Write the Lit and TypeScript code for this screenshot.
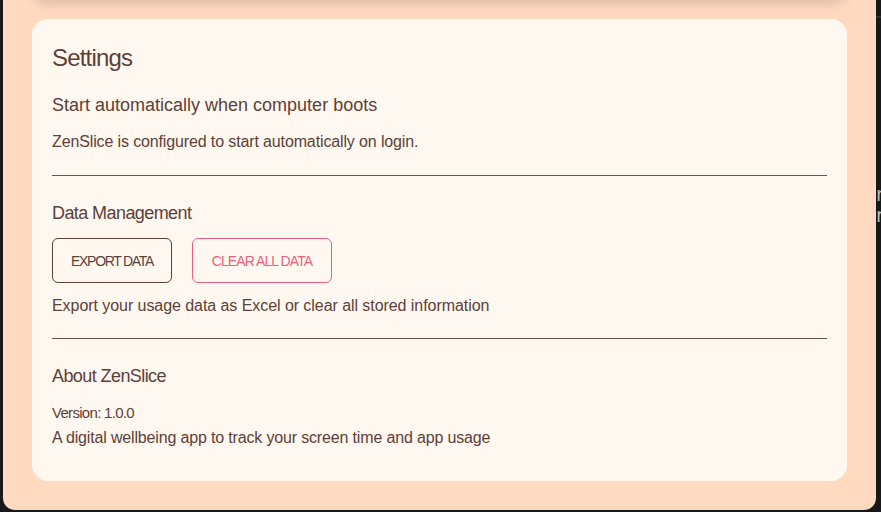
import { LitElement, html, css } from "lit";
import { customElement } from "lit/decorators.js";

@customElement("app-root")
export class AppRoot extends LitElement {
  static styles = css`
    :host {
      display: block;
      width: 881px;
      height: 512px;
      overflow: hidden;
      background: #161819;
      font-family: "Liberation Sans", sans-serif;
      color: #5d4037;
      position: relative;
    }
    .panel {
      box-sizing: border-box;
      margin-left: 3px;
      width: 873px;
      height: 510px;
      background: #ffdac1;
      border-radius: 0 0 12px 12px;
      padding: 19px 29px 0;
      position: relative;
      overflow: hidden;
    }
    .prev {
      position: absolute;
      left: 29px;
      right: 29px;
      top: -40px;
      height: 40px;
      border-radius: 16px;
      box-shadow: 0 4px 12px rgba(93, 64, 55, 0.2);
    }
    .card {
      box-sizing: border-box;
      height: 462px;
      background: #fff8f0;
      border-radius: 16px;
      padding: 20px;
      display: flex;
      flex-direction: column;
    }
    h1 {
      margin: 4px 0 0;
      font-size: 24px;
      line-height: 30px;
      font-weight: 400;
      letter-spacing: -0.8px;
    }
    h2 {
      margin: 0;
      font-weight: 400;
      font-size: 18px;
      line-height: 24px;
      letter-spacing: -0.58px;
    }
    p {
      margin: 0;
      font-size: 16px;
      line-height: 24px;
    }
    .s1 { margin-top: 20px; letter-spacing: 0; }
    .s1p { margin-top: 13px; letter-spacing: -0.13px; }
    hr {
      border: 0;
      height: 1px;
      background: #6d5048;
      margin: 0;
      flex: none;
    }
    .hr1 { margin-top: 21px; }
    .h-data { margin-top: 25px; }
    .buttons {
      display: flex;
      gap: 20px;
      margin-top: 13px;
    }
    button {
      box-sizing: border-box;
      height: 45px;
      border-radius: 6px;
      background: transparent;
      font-family: inherit;
      font-size: 14px;
      padding: 0;
      text-transform: uppercase;
    }
    .export {
      width: 120px;
      border: 1px solid #5d4037;
      color: #5d4037;
      letter-spacing: -1.3px;
    }
    .clear {
      width: 140px;
      border: 1px solid #ec5f80;
      color: #ec5f80;
      letter-spacing: -0.93px;
    }
    .hint { margin-top: 11px; letter-spacing: -0.06px; }
    .hr2 { margin-top: 20px; }
    .h-about { margin-top: 25px; }
    .ver { margin-top: 13px; font-size: 15px; letter-spacing: -0.7px; }
    .desc { margin-top: 1px; letter-spacing: -0.16px; }
    .edge {
      position: absolute;
      left: 876px;
      top: 184px;
      font-family: "DejaVu Sans", sans-serif;
      font-size: 19px;
      line-height: 21px;
      color: #b9b9b9;
    }
    .tick {
      position: absolute;
      left: 876px;
      right: 0;
      top: 16px;
      height: 2px;
      background: #2e3031;
    }
  `;

  render() {
    return html`
      <div class="panel">
        <div class="prev"></div>
        <div class="card">
          <h1>Settings</h1>
          <h2 class="s1">Start automatically when computer boots</h2>
          <p class="s1p">ZenSlice is configured to start automatically on login.</p>
          <hr class="hr1" />
          <h2 class="h-data">Data Management</h2>
          <div class="buttons">
            <button class="export">Export Data</button>
            <button class="clear">Clear All Data</button>
          </div>
          <p class="hint">Export your usage data as Excel or clear all stored information</p>
          <hr class="hr2" />
          <h2 class="h-about">About ZenSlice</h2>
          <p class="ver">Version: 1.0.0</p>
          <p class="desc">A digital wellbeing app to track your screen time and app usage</p>
        </div>
      </div>
      <div class="tick"></div>
      <div class="edge">r<br />r</div>
    `;
  }
}
